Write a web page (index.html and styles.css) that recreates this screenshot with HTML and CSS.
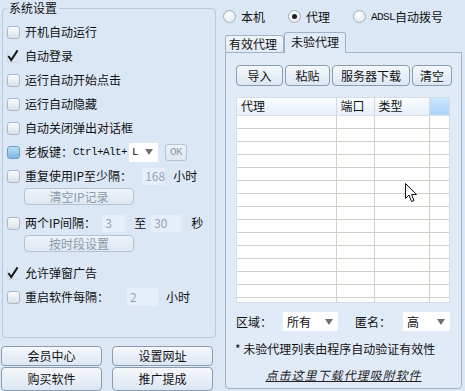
FILE: index.html
```html
<!DOCTYPE html>
<html lang="zh-CN">
<head>
    <meta charset="UTF-8">
    <title>系统设置</title>
    <link rel="stylesheet" href="styles.css">
</head>
<body>
<div class="window">
    <div class="left">
        <fieldset class="settings">
            <legend>系统设置</legend>
            <div class="row"><span class="check"></span>开机自动运行</div>
            <div class="row"><span class="check checked"><svg viewBox="0 0 13 13" width="13" height="13"><path d="M1.5 7 L4.5 11.5 L11.5 1" fill="none" stroke="#1c1c1c" stroke-width="2.2"/></svg></span>自动登录</div>
            <div class="row"><span class="check"></span>运行自动开始点击</div>
            <div class="row"><span class="check"></span>运行自动隐藏</div>
            <div class="row"><span class="check"></span>自动关闭弹出对话框</div>
            <div class="row"><span class="check active"></span>老板键：<span class="mono">Ctrl+Alt+</span><span class="combo key"><span class="mono">L</span><i class="arrow"></i></span><span class="mini-btn mono">OK</span></div>
            <div class="row"><span class="check"></span>重复使用IP至少隔：<span class="field f-hours">168</span><span class="unit">小时</span></div>
            <div class="sub-btn">清空IP记录</div>
            <div class="row gap-top"><span class="check"></span>两个IP间隔：<span class="field f-from">3</span><span class="to">至</span><span class="field f-to">30</span><span class="sec">秒</span></div>
            <div class="sub-btn">按时段设置</div>
            <div class="row gap-top2"><span class="check checked"><svg viewBox="0 0 13 13" width="13" height="13"><path d="M1.5 7 L4.5 11.5 L11.5 1" fill="none" stroke="#1c1c1c" stroke-width="2.2"/></svg></span>允许弹窗广告</div>
            <div class="row"><span class="check"></span>重启软件每隔：<span class="field f-restart">2</span><span class="unit">小时</span></div>
        </fieldset>
        <div class="actions">
            <div class="btn">会员中心</div>
            <div class="btn">设置网址</div>
            <div class="btn tall">购买软件</div>
            <div class="btn tall">推广提成</div>
        </div>
    </div>

    <div class="right">
        <div class="modes">
            <label class="mode"><span class="radio"></span>本机</label>
            <label class="mode"><span class="radio on"></span>代理</label>
            <label class="mode"><span class="radio"></span><span class="mono">ADSL</span>自动拨号</label>
        </div>
        <div class="tabs">
            <div class="tab">有效代理</div>
            <div class="tab current">未验代理</div>
        </div>
        <div class="panel">
            <div class="toolbar">
                <div class="btn b-import">导入</div>
                <div class="btn b-paste">粘贴</div>
                <div class="btn b-server">服务器下载</div>
                <div class="btn b-clear">清空</div>
            </div>
            <div class="grid">
                <table>
                    <colgroup><col class="c1"><col class="c2"><col class="c3"><col class="c4"></colgroup>
                    <tr><th>代理</th><th>端口</th><th>类型</th><th class="corner"></th></tr>
                    <tr><td></td><td></td><td></td><td></td></tr>
                    <tr><td></td><td></td><td></td><td></td></tr>
                    <tr><td></td><td></td><td></td><td></td></tr>
                    <tr><td></td><td></td><td></td><td></td></tr>
                    <tr><td></td><td></td><td></td><td></td></tr>
                    <tr><td></td><td></td><td></td><td></td></tr>
                    <tr><td></td><td></td><td></td><td></td></tr>
                    <tr><td></td><td></td><td></td><td></td></tr>
                    <tr><td></td><td></td><td></td><td></td></tr>
                    <tr><td></td><td></td><td></td><td></td></tr>
                    <tr><td></td><td></td><td></td><td></td></tr>
                    <tr><td></td><td></td><td></td><td></td></tr>
                    <tr><td></td><td></td><td></td><td></td></tr>
                    <tr><td></td><td></td><td></td><td></td></tr>
                    <tr><td></td><td></td><td></td><td></td></tr>
                </table>
            </div>
            <div class="filters">
                <span>区域：</span>
                <span class="combo area">所有<i class="arrow"></i></span>
                <span class="anon">匿名：</span>
                <span class="combo level">高<i class="arrow"></i></span>
            </div>
            <p class="note">* 未验代理列表由程序自动验证有效性</p>
            <p class="link"><a href="#">点击这里下载代理吸附软件</a></p>
        </div>
    </div>
</div>

<svg class="cursor" width="13" height="20" viewBox="0 0 13 20">
    <path d="M0.5 0.5 L0.5 15.5 L4 12 L6.5 18.5 L9 17.5 L6.5 11.5 L11.5 11.5 Z" fill="#fff" stroke="#111" stroke-width="1"/>
</svg>
</body>
</html>
```

FILE: styles.css
```css
* {
    box-sizing: border-box;
}
body {
    margin: 0;
    width: 465px;
    height: 391px;
    overflow: hidden;
    background: #dce7f5;
    font-family: "Noto Sans CJK SC", "Noto Sans", sans-serif;
    font-size: 12px;
    line-height: 16px;
    color: #111;
}
.mono {
    font-family: "Liberation Mono", "DejaVu Sans Mono", monospace;
    font-size: 11px;
    letter-spacing: -0.6px;
}
.window {
    display: flex;
}

/* left column */
.left {
    width: 216px;
    margin-left: 1px;
    display: flex;
    flex-direction: column;
}
.settings {
    margin: 0 0 0 1px;
    padding: 4px 0 0 4px;
    width: 214px;
    height: 338px;
    min-width: 0;
    border: 1px solid #b8cadf;
    border-radius: 4px;
}
.settings legend {
    padding: 0 2px;
    margin-left: 0;
    line-height: 16px;
}
.row {
    display: flex;
    align-items: center;
    height: 24px;
    white-space: nowrap;
}
.check {
    flex: none;
    width: 13px;
    height: 13px;
    margin-right: 5px;
    border: 1px solid #adb8c6;
    border-radius: 3px;
    background: linear-gradient(#fbfbfb, #dce1e7);
    display: flex;
}
.check.checked {
    border-color: #cfd7e1;
    border-top-color: transparent;
    border-right-color: transparent;
    background: transparent;
}
.check.checked svg {
    margin: -2px 0 0 -1px;
}
.check.active {
    border-color: #6f9cc6;
    background: linear-gradient(#b9dcf4, #7db7e3);
}
.combo {
    display: flex;
    align-items: center;
    justify-content: space-between;
    background: #fff;
    height: 19px;
    padding: 0 5px 0 4px;
}
.combo.key {
    width: 29px;
    margin-left: 2px;
    padding-left: 3px;
}
.arrow {
    width: 0;
    height: 0;
    border-left: 4px solid transparent;
    border-right: 4px solid transparent;
    border-top: 6px solid #707070;
}
.mini-btn {
    margin-left: 7px;
    width: 22px;
    height: 17px;
    border: 1px solid #b5c4d5;
    border-radius: 3px;
    background: linear-gradient(#edf2f8, #dde6f1);
    color: #8d99a7;
    display: flex;
    align-items: center;
    justify-content: center;
}
.field {
    height: 17px;
    background: #e6eef9;
    color: #97a3b1;
    padding-left: 3px;
    display: flex;
    align-items: center;
}
.f-hours {
    width: 23px;
    margin-left: 10px;
}
.f-from {
    width: 23px;
    margin-left: 6px;
}
.f-to {
    width: 30px;
    margin-left: 5px;
}
.f-restart {
    width: 31px;
    margin-left: 18px;
    height: 18px;
}
.unit {
    margin-left: 8px;
}
.to {
    margin-left: 9px;
}
.sec {
    margin-left: 10px;
}
.sub-btn {
    margin-left: 17px;
    width: 110px;
    height: 17px;
    border: 1px solid #b3c2d4;
    border-radius: 4px;
    background: linear-gradient(#eef3f9, #dee7f2);
    color: #8d99a7;
    text-align: center;
    line-height: 15px;
}
.gap-top {
    margin-top: 6px;
}
.gap-top2 {
    margin-top: 9px;
}

.btn {
    border: 1px solid #8b9bb0;
    border-radius: 4px;
    background: linear-gradient(#f5f8fc, #dce6f2);
    display: flex;
    align-items: center;
    justify-content: center;
    white-space: nowrap;
}
.actions {
    margin-top: 8px;
    display: grid;
    grid-template-columns: 101px 101px;
    column-gap: 10px;
    row-gap: 1px;
}
.actions .btn {
    height: 20px;
}
.actions .btn.tall {
    height: 24px;
}

/* right column */
.right {
    margin-left: 5px;
    width: 243px;
}
.modes {
    display: flex;
    align-items: center;
    gap: 23px;
    margin-top: 8px;
    height: 17px;
    padding-left: 1px;
}
.mode {
    display: flex;
    align-items: center;
    white-space: nowrap;
}
.radio {
    width: 13px;
    height: 13px;
    border: 1px solid #a5afba;
    border-radius: 50%;
    background: radial-gradient(circle at 40% 35%, #ffffff, #dde3ea);
    margin-right: 5px;
    display: flex;
    align-items: center;
    justify-content: center;
}
.radio.on::after {
    content: "";
    width: 5px;
    height: 5px;
    border-radius: 50%;
    background: #1e1e1e;
}
.tabs {
    display: flex;
    align-items: flex-end;
    margin-top: 7px;
    padding-left: 3px;
    height: 20px;
}
.tab {
    height: 17px;
    padding: 0 3px;
    border: 1px solid #9fb1c5;
    border-bottom: none;
    border-radius: 3px 3px 0 0;
    background: linear-gradient(#f2f6fb, #e1e9f4);
    line-height: 16px;
    width: 59px;
}
.tab.current {
    position: relative;
    z-index: 1;
    height: 21px;
    width: 62px;
    margin-bottom: -1px;
    background: #e1ebf7;
    padding-top: 1px;
    text-align: center;
}
.panel {
    margin-left: 3px;
    width: 237px;
    height: 337px;
    border: 1px solid #a1b3c8;
    border-radius: 0 0 4px 4px;
    background: #e1ebf7;
    padding: 12px 0 0 10px;
}
.toolbar {
    display: flex;
    gap: 2px;
}
.toolbar .btn {
    height: 21px;
}
.b-import { width: 47px; }
.b-paste { width: 45px; }
.b-server { width: 78px; }
.b-clear { width: 40px; }

.grid {
    margin-top: 11px;
    width: 214px;
    height: 206px;
    overflow: hidden;
    background: #fff;
    border: 1px solid #d3dde8;
}
table {
    width: 212px;
    border-collapse: collapse;
    table-layout: fixed;
}
.c1 { width: 99px; }
.c2 { width: 38px; }
.c3 { width: 55px; }
.c4 { width: 20px; }
th {
    height: 17px;
    padding: 0 0 0 4px;
    font-weight: normal;
    text-align: left;
    background: linear-gradient(#fbfdff, #e5eef9);
    border-right: 1px solid #cfd9e5;
    border-bottom: 1px solid #d8e0ea;
}
th.corner {
    background: linear-gradient(#cbe6fd, #a9d3f8);
    border-right: none;
}
td {
    height: 13px;
    padding: 0;
    border-right: 1px solid #d4d0c8;
    border-bottom: 1px solid #d4d0c8;
}
td:last-child {
    border-right: none;
}
.filters {
    margin-top: 9px;
    height: 19px;
    display: flex;
    align-items: center;
    white-space: nowrap;
}
.combo.area {
    margin-left: 11px;
    width: 55px;
}
.anon {
    margin-left: 17px;
}
.combo.level {
    margin-left: 12px;
    width: 47px;
}
.note {
    margin: 10px 0 0 -1px;
}
.link {
    margin: 10px 0 0 -10px;
    text-align: center;
}
.link a {
    color: #222;
    font-style: italic;
    letter-spacing: 1px;
}
.cursor {
    position: absolute;
    left: 405px;
    top: 183px;
}
```
